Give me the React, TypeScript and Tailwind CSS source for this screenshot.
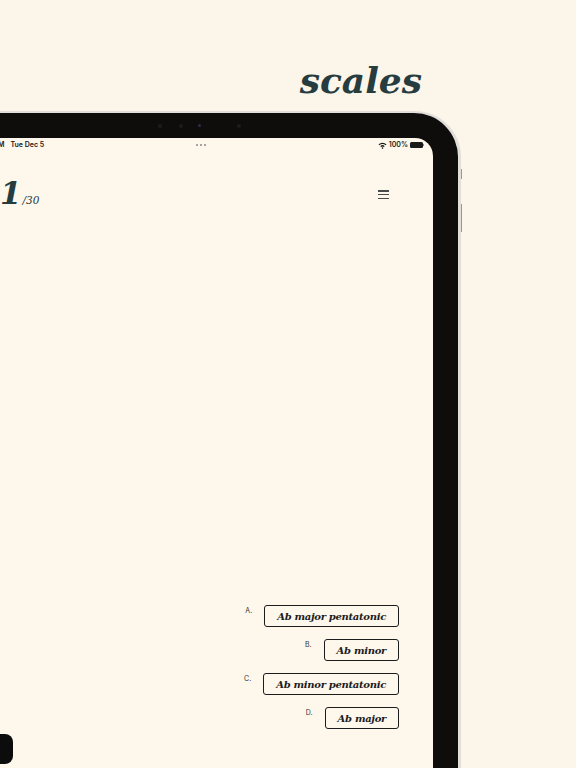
const serif = { fontFamily: '"DejaVu Serif", serif' }

const options = [
    { label: 'A.', text: 'Ab major pentatonic' },
    { label: 'B.', text: 'Ab minor' },
    { label: 'C.', text: 'Ab minor pentatonic' },
    { label: 'D.', text: 'Ab major' },
]

function StatusBar() {
    return (
        <div className="flex items-center h-[12px] text-[7px] font-semibold text-[#1a1a1a] font-['Inter',sans-serif]">
            <span className="ml-[-23px] whitespace-nowrap">9:41 AM</span>
            <span className="ml-[6px] whitespace-nowrap">Tue Dec 5</span>
            <div className="ml-[152px] flex gap-[2px]">
                <span className="w-[2px] h-[2px] rounded-full bg-[#8a8a8a]" />
                <span className="w-[2px] h-[2px] rounded-full bg-[#8a8a8a]" />
                <span className="w-[2px] h-[2px] rounded-full bg-[#8a8a8a]" />
            </div>
            <div className="ml-auto mr-[9px] flex items-center gap-[2px]">
                <svg width="9" height="7" viewBox="0 0 9 7">
                    <path d="M0.5 2.4 A5.6 5.6 0 0 1 8.5 2.4 L7.6 3.3 A4.3 4.3 0 0 0 1.4 3.3 Z" fill="#1a1a1a" />
                    <path d="M2.3 4.2 A3 3 0 0 1 6.7 4.2 L5.8 5.1 A1.8 1.8 0 0 0 3.2 5.1 Z" fill="#1a1a1a" />
                    <circle cx="4.5" cy="6.1" r="0.8" fill="#1a1a1a" />
                </svg>
                <span>100%</span>
                <div className="flex items-center">
                    <div className="w-[13px] h-[6px] rounded-[1.5px] bg-[#1a1a1a]" />
                    <div className="w-[1px] h-[2px] bg-[#8a8a8a]" />
                </div>
            </div>
        </div>
    )
}

export default function App() {
    return (
        <div className="w-[576px] h-[768px] overflow-hidden bg-[#fbf5ea] flex flex-col">
            <div className="pt-[62px] pr-[154px] text-right">
                <span className="text-[36px] leading-none font-bold italic text-[#273c3e]" style={serif}>
                    scales
                </span>
            </div>

            <div className="relative mt-[12px] w-[461px] flex-1 flex flex-col bg-[#e2dfda] pt-[2px] pr-[3px] rounded-tr-[46px]">
                {/* side buttons */}
                <div className="absolute right-[-1px] top-[58px] w-[1.5px] h-[10px] bg-[#9a9893]" />
                <div className="absolute right-[-1px] top-[93px] w-[1.5px] h-[28px] bg-[#9a9893]" />

                <div className="flex-1 flex flex-col bg-[#0e0d0c] rounded-tr-[44px] pr-[25px]">
                    <div className="h-[25px] flex items-center">
                        <span className="ml-[158px] w-[4px] h-[4px] rounded-full bg-[#1d1c1c]" />
                        <span className="ml-[17px] w-[4px] h-[4px] rounded-full bg-[#1d1c1c]" />
                        <span className="ml-[15px] w-[3px] h-[3px] rounded-full bg-[#2a2e4a]" />
                        <span className="ml-[36px] w-[4px] h-[4px] rounded-full bg-[#1d1c1c]" />
                    </div>

                    <div className="flex-1 flex flex-col overflow-hidden bg-[#fdf7ec] rounded-tr-[18px]">
                        <div className="pt-[1px]">
                            <StatusBar />
                        </div>

                        <div className="flex items-start justify-between mt-[27px] pr-[44px]">
                            <div className="flex items-baseline" style={serif}>
                                <span className="text-[31px] leading-none font-bold italic text-[#273c3e]">1</span>
                                <span className="ml-[1px] text-[10.5px] italic text-[#273c3e]">/30</span>
                            </div>
                            <div className="mt-[12px] flex flex-col gap-[2.3px]">
                                <span className="w-[11px] h-[1.5px] bg-[#4a4a4a]" />
                                <span className="w-[11px] h-[1.5px] bg-[#4a4a4a]" />
                                <span className="w-[11px] h-[1.5px] bg-[#4a4a4a]" />
                            </div>
                        </div>

                        <div className="mt-[396px] flex flex-col items-end gap-[12px] pr-[34px]">
                            {options.map(o => (
                                <div key={o.label} className="flex items-start">
                                    <span className="mt-[1px] mr-[12px] text-[7px] text-[#333] font-['Inter',sans-serif]">
                                        {o.label}
                                    </span>
                                    <div
                                        className="h-[22px] flex items-center px-[12px] border-[1.5px] border-[#1c1c1c] rounded-[3px] text-[10px] tracking-[-0.3px] font-bold italic text-[#1c1c1c]"
                                        style={serif}
                                    >
                                        {o.text}
                                    </div>
                                </div>
                            ))}
                        </div>

                        <div className="mt-[5px] w-[13px] h-[30px] rounded-r-[8px] bg-[#0c0c0c]" />
                    </div>
                </div>
            </div>
        </div>
    )
}
